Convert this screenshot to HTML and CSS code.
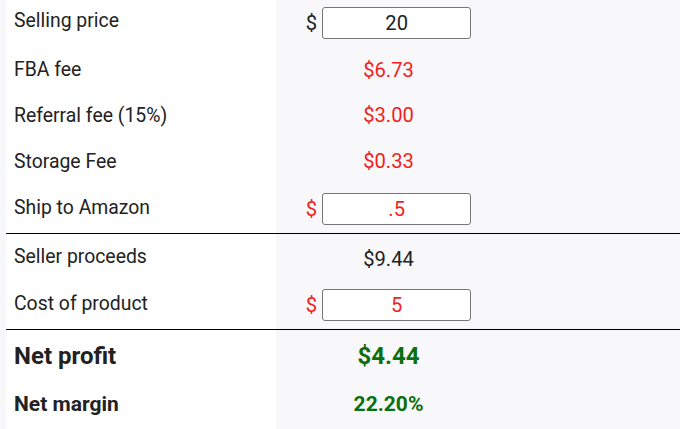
FILE: index.html
```html
<!DOCTYPE html>
<html lang="en">
  <head>
    <meta charset="UTF-8" />
    <title>FBA Calculator</title>
    <link rel="stylesheet" href="styles.css">
  </head>
  <body>
    <div class="calc">
      <div class="row r-price">
        <div class="label">Selling price</div>
        <div class="value">
          <span class="cur">$</span><input class="field" type="text" value="20" />
        </div>
      </div>
      <div class="row r-fba">
        <div class="label">FBA fee</div>
        <div class="value cost">$6.73</div>
      </div>
      <div class="row r-referral">
        <div class="label">Referral fee (15%)</div>
        <div class="value cost">$3.00</div>
      </div>
      <div class="row r-storage">
        <div class="label">Storage Fee</div>
        <div class="value cost">$0.33</div>
      </div>
      <div class="row r-ship">
        <div class="label">Ship to Amazon</div>
        <div class="value cost">
          <span class="cur">$</span><input class="field" type="text" value=".5" />
        </div>
      </div>
      <div class="row divided r-proceeds">
        <div class="label">Seller proceeds</div>
        <div class="value">$9.44</div>
      </div>
      <div class="row r-product">
        <div class="label">Cost of product</div>
        <div class="value cost">
          <span class="cur">$</span><input class="field" type="text" value="5" />
        </div>
      </div>
      <div class="row divided total">
        <div class="label">Net profit</div>
        <div class="value profit">$4.44</div>
      </div>
      <div class="row margin">
        <div class="label">Net margin</div>
        <div class="value profit">22.20%</div>
      </div>
    </div>
  </body>
</html>
```

FILE: styles.css
```css
body {
  margin: 0;
  font-family: Roboto, "Liberation Sans", sans-serif;
  color: #222;
  background: #f8f7fa;
}
.calc {
  margin-left: 6px;
  margin-top: -6px;
}
.row {
  display: grid;
  grid-template-columns: 270px 225px 1fr;
  height: 47px;
  font-size: 19.4px;
}
.label {
  background: #fff;
  display: flex;
  align-items: center;
  padding-left: 8px;
}
.value {
  display: flex;
  justify-content: center;
  align-items: center;
  font-size: 20.2px;
}
.divided {
  border-top: 1px solid #000;
}
.r-price { height: 52px; }
.r-price .value { padding-top: 6px; }
.r-fba { height: 47px; }
.r-referral { height: 44px; }
.r-storage { height: 48px; }
.r-ship { height: 48px; }
.r-ship .label { padding-bottom: 4px; }
.r-proceeds { height: 44px; }
.r-proceeds .value { padding-top: 5px; }
.r-product { height: 51px; }
.r-product .value { padding-top: 2px; }
.cost {
  color: #f31d1d;
}
.cur {
  margin-right: 5px;
}
.field {
  width: 149px;
  height: 32px;
  box-sizing: border-box;
  border: 1px solid #767676;
  border-radius: 3px;
  background: #fff;
  font: inherit;
  color: inherit;
  text-align: center;
  padding: 0;
}
.total {
  height: 51px;
  font-size: 24px;
  font-weight: bold;
}
.total .value {
  font-size: 24px;
}
.margin {
  height: 50px;
  font-size: 21px;
  font-weight: bold;
}
.margin .label,
.margin .value {
  padding-bottom: 4px;
}
.margin .value {
  font-size: 21px;
}
.profit {
  color: #0b6f0b;
}
```
